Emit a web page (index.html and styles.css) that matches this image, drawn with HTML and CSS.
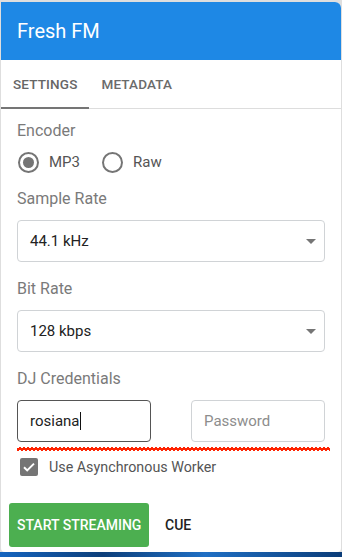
FILE: index.html
```html
<!DOCTYPE html>
<html>
<head>
	<title>Fresh FM</title>
	<link rel="stylesheet" href="styles.css">
</head>
<body>
	<div class="card">
		<div class="head">Fresh FM</div>
		<ul class="tabs">
			<li class="active">SETTINGS</li>
			<li>METADATA</li>
		</ul>
		<div class="form">
			<div class="label">Encoder</div>
			<div class="radios">
				<label class="radio"><span class="dot on"></span>MP3</label>
				<label class="radio"><span class="dot"></span>Raw</label>
			</div>

			<div class="label gap">Sample Rate</div>
			<div class="select">44.1 kHz<span class="caret"></span></div>

			<div class="label gap">Bit Rate</div>
			<div class="select">128 kbps<span class="caret"></span></div>

			<div class="label gap">DJ Credentials</div>
			<div class="creds">
				<div class="input focus">rosiana<span class="cursor"></span></div>
				<div class="input holder">Password</div>
			</div>
			<div class="squiggle"></div>

			<label class="check"><span class="box">
				<svg width="18" height="18" viewBox="0 0 18 18"><path d="M4 9.2l3.2 3.2L14 5.6" fill="none" stroke="#fff" stroke-width="2"/></svg>
			</span>Use Asynchronous Worker</label>
		</div>
		<div class="actions">
			<button class="start">START STREAMING</button>
			<button class="cue">CUE</button>
		</div>
	</div>
	<div class="desk"></div>
</body>
</html>
```

FILE: styles.css
```css
*{
	padding: 0;
	margin: 0;
	box-sizing: border-box;
}
body{
	width: 342px;
	height: 557px;
	overflow: hidden;
	background: #dedede;
	font-family: Roboto, "Liberation Sans", sans-serif;
	padding-top: 2px;
}
.card{
	margin: 0 1px;
	height: 550px;
	background: #fff;
	border-radius: 0 6px 4px 4px;
	overflow: hidden;
}
.head{
	height: 58px;
	background: #1e88e5;
	color: #fff;
	font-size: 20px;
	line-height: 58px;
	padding-left: 16px;
}
.tabs{
	list-style: none;
	display: flex;
	height: 49px;
	border-bottom: 1px solid #ddd;
}
.tabs li{
	padding: 0 12px;
	font-size: 13.5px;
	font-weight: 500;
	color: #6b6b6b;
	line-height: 49px;
	letter-spacing: 0.15px;
}
.tabs .active{
	color: #666;
	box-shadow: inset 0 -2px 0 #757575;
	height: 49px;
}
.form{
	padding: 12px 16px 0 16px;
}
.label{
	font-size: 16px;
	line-height: 20px;
	color: #7a7a7a;
}
.label.gap{
	margin-top: 17px;
}
.radios{
	display: flex;
	gap: 21px;
	margin-top: 11px;
	height: 20px;
}
.radio{
	display: flex;
	align-items: center;
	gap: 10px;
	font-size: 15px;
	color: #555;
}
.dot{
	width: 21px;
	height: 21px;
	border: 2px solid #757575;
	border-radius: 50%;
	display: flex;
	align-items: center;
	justify-content: center;
	margin-left: 1px;
}
.dot.on::after{
	content: "";
	width: 11px;
	height: 11px;
	border-radius: 50%;
	background: #757575;
}
.select{
	margin-top: 11px;
	height: 42px;
	border: 1px solid #d0d3d6;
	border-radius: 4px;
	display: flex;
	align-items: center;
	justify-content: space-between;
	padding: 0 8px 0 12px;
	font-size: 15px;
	color: #222;
}
.caret{
	width: 0;
	height: 0;
	border-left: 5px solid transparent;
	border-right: 5px solid transparent;
	border-top: 5px solid #757575;
}
.creds{
	display: flex;
	justify-content: space-between;
	margin-top: 11px;
}
.input{
	width: 134px;
	height: 42px;
	border: 1px solid #d0d3d6;
	border-radius: 4px;
	display: flex;
	align-items: center;
	padding-left: 12px;
	font-size: 15px;
	color: #222;
}
.input.focus{
	border-color: #555;
}
.input.holder{
	color: #8d8d8d;
}
.cursor{
	width: 1px;
	height: 18px;
	background: #111;
	margin-left: 1px;
}
.squiggle{
	height: 4px;
	margin-top: 5px;
	margin-right: -5px;
	background:
		linear-gradient(135deg, transparent 30%, #ff2200 30%, #ff2200 70%, transparent 70%) 0 0/4px 4px repeat-x,
		linear-gradient(45deg, transparent 30%, #ff2200 30%, #ff2200 70%, transparent 70%) 2px 0/4px 4px repeat-x;
}
.check{
	display: flex;
	align-items: center;
	gap: 11px;
	margin-top: 7px;
	margin-left: 3px;
	font-size: 14.3px;
	color: #555;
}
.box{
	width: 18px;
	height: 18px;
	border-radius: 2px;
	background: #757575;
	display: flex;
}
.actions{
	display: flex;
	align-items: center;
	gap: 8px;
	padding: 27px 8px 0 8px;
}
button{
	border: none;
	background: none;
	font-family: Roboto, "Liberation Sans", sans-serif;
	font-size: 14px;
	font-weight: 500;
	height: 44px;
	padding: 0 8px;
	white-space: nowrap;
}
.start{
	background: #4caf50;
	color: #fff;
	border-radius: 3px;
	width: 140px;
}
.cue{
	color: #222;
}
.desk{
	height: 5px;
	background: linear-gradient(90deg, #1565c0, #0d3f7a 30%, #1f6fc4 60%, #0b3c78);
}
```
